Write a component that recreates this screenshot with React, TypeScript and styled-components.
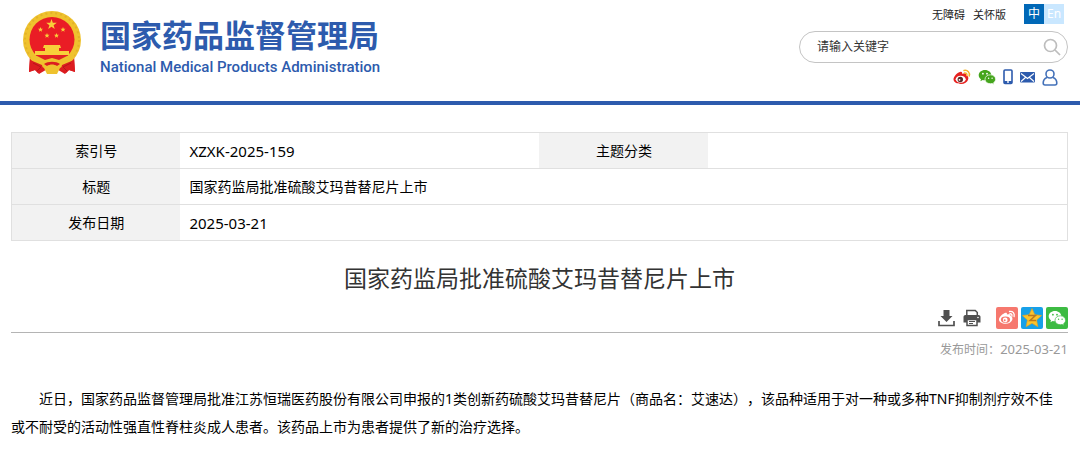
import React from "react";
import styled, { createGlobalStyle } from "styled-components";

const GlobalStyle = createGlobalStyle`
  *, *::before, *::after { box-sizing: border-box; }
  body {
    margin: 0;
    background: #fff;
    color: #000;
    font-family: "Noto Sans", "Noto Sans CJK SC", sans-serif;
    font-size: 14px;
    text-spacing-trim: space-all;
  }
`;

const Header = styled.header`
  display: flex;
  justify-content: space-between;
  height: 105px;
  padding: 4px 12px 0 22px;
  border-bottom: 4px solid #2d5bad;
`;

const Brand = styled.a`
  display: flex;
  align-items: flex-start;
  gap: 18px;
  padding-top: 6px;
  color: #2d5bad;
  text-decoration: none;
`;

const BrandText = styled.span`
  display: flex;
  flex-direction: column;
  padding-top: 2px;
`;

const BrandName = styled.span`
  font: 700 31px/44px "Noto Sans CJK SC", sans-serif;
  white-space: nowrap;
`;

const BrandLatin = styled.span`
  font: 500 15px/22px Roboto, sans-serif;
  white-space: nowrap;
`;

const Tools = styled.div`
  display: flex;
  flex-direction: column;
  align-items: flex-end;
  width: 269px;
`;

const TopLinks = styled.nav`
  display: flex;
  align-items: center;
  gap: 8px;
  height: 20px;
  padding-right: 4px;
  font-size: 11px;
`;

const TopLink = styled.a`
  color: #222;
  text-decoration: none;
  white-space: nowrap;
`;

const Languages = styled.div`
  display: flex;
  margin-left: 10px;
`;

const Language = styled.button<{ $active?: boolean }>`
  width: 20px;
  height: 20px;
  padding: 0;
  border: 0;
  background: ${(p) => (p.$active ? "#0068b7" : "#c9e7ff")};
  color: #fff;
  font: 12px/20px "Noto Sans", "Noto Sans CJK SC", sans-serif;
`;

const Search = styled.form`
  display: flex;
  align-items: center;
  width: 100%;
  height: 32px;
  margin-top: 7px;
  padding: 0 6px 0 17px;
  border: 1px solid #c4c4c4;
  border-radius: 16px;
`;

const SearchInput = styled.input`
  flex: 1;
  min-width: 0;
  padding: 0;
  border: 0;
  outline: 0;
  background: none;
  font: 12px/20px "Noto Sans", "Noto Sans CJK SC", sans-serif;
  &::placeholder { color: #333; opacity: 1; }
`;

const IconButton = styled.button`
  display: flex;
  padding: 0;
  border: 0;
  background: none;
`;

const IconLink = styled.a`
  display: flex;
`;

const Contacts = styled.div`
  display: flex;
  align-items: center;
  gap: 7px;
  height: 18px;
  margin-top: 5px;
  padding-right: 10px;
`;

const Main = styled.main`
  padding: 27px 12px 8px 11px;
`;

const Info = styled.table`
  width: 100%;
  table-layout: fixed;
  border-collapse: collapse;
`;

const LabelColumn = styled.col`
  width: 16%;
`;

const ValueColumn = styled.col`
  width: 34%;
`;

const Row = styled.tr`
  height: 36px;
  border: 1px solid #e0e0e0;
`;

const Label = styled.th`
  padding: 0;
  background: #f2f2f2;
  font-weight: 400;
  line-height: 20px;
`;

const Value = styled.td<{ $latin?: boolean }>`
  padding: 0 9px;
  font-size: ${(p) => (p.$latin ? 15 : 14)}px;
  line-height: 20px;
`;

const Title = styled.h1`
  margin: 20px 0 12px;
  color: #333;
  font-size: 23px;
  font-weight: 400;
  line-height: 34px;
  text-align: center;
`;

const Actions = styled.div`
  display: flex;
  justify-content: flex-end;
  align-items: center;
  gap: 3px;
  height: 26px;
  padding-bottom: 4px;
  border-bottom: 1px solid #b4b4b4;
`;

const PageActions = styled.div`
  display: flex;
  gap: 8px;
  margin-right: 12px;
`;

const Published = styled.p`
  display: flex;
  justify-content: flex-end;
  align-items: baseline;
  margin: 6px 0 25px;
  color: #999;
  font-size: 12px;
  line-height: 20px;
`;

const PublishedDate = styled.time`
  font-size: 13px;
`;

const Article = styled.p`
  margin: 0;
  padding-right: 4px;
  line-height: 28px;
  text-indent: 2em;
`;

const Emblem = () => (
  <svg width="60" height="65" viewBox="0 0 60 65" aria-hidden="true">
    <path d="M8 44L7 62l6-2 4 4 10-6h6l10 6 4-4 6 2-1-18z" fill="#dc1c20" />
    <circle cx="30" cy="30" r="29" fill="#efc22e" />
    <circle cx="30" cy="30" r="27" fill="none" stroke="#e3b228" strokeWidth="2" strokeDasharray="2 3" />
    <circle cx="30" cy="29.500" r="22.500" fill="#ea1d25" />
    <g fill="#f8cf3a">
      <path d="M29.500 9l1.300 3.800h4l-3.200 2.400 1.200 3.900-3.300-2.300-3.300 2.300 1.200-3.900-3.200-2.400h4z" />
      <path d="M18.500 17l.7 1.700h1.800l-1.400 1.200.5 1.800-1.600-1-1.600 1 .5-1.800-1.400-1.200h1.800zM41 17l.7 1.700h1.800l-1.400 1.200.5 1.800-1.600-1-1.600 1 .5-1.800-1.400-1.200h1.800zM25 23l.7 1.700h1.800l-1.400 1.200.5 1.800-1.600-1-1.600 1 .5-1.800-1.400-1.200h1.800zM34.500 23l.7 1.700h1.800l-1.400 1.200.5 1.800-1.600-1-1.600 1 .5-1.800-1.400-1.200h1.800z" />
      <path d="M22 35h16l1 3h-2v3h10v4H13v-4h10v-3h-2z" />
    </g>
    <path d="M6 42c3 2 5 4 8 4h32c3 0 5-2 8-4l-6 11-9 3-4 8H25l-4-8-9-3z" fill="#efc22e" />
    <path d="M15 46h30l-8 4-7-2-7 2z" fill="#df2322" />
    <path d="M22 54c4-3 12-3 16 0l-3 2c-3-2-7-2-10 0z" fill="#dc1c20" />
    <path d="M8 50l12 5 1 4-5 4-3-3-6 2zM52 50l-12 5-1 4 5 4 3-3 6 2z" fill="#dc1c20" />
    <path d="M11 53l8 4-4 4M49 53l-8 4 4 4" fill="none" stroke="#b81419" />
  </svg>
);

const SearchIcon = () => (
  <svg width="18" height="18" viewBox="0 0 18 18" fill="none" stroke="#bdbdbd" strokeWidth="1.700" aria-hidden="true">
    <circle cx="7.500" cy="7.500" r="6" />
    <path d="M12 12l5 5" />
  </svg>
);

const WeiboIcon = () => (
  <svg width="18" height="16" viewBox="0 0 18 16" aria-hidden="true">
    <path d="M7 3c1.500-.6 2.500.1 2 1.700 3-1.100 4.500-.4 4 1.300 4.500 1.500 2.500 9-5 9C4 15 .5 13.300.5 10.300.5 7.500 5 3 7 3z" fill="#e6211f" />
    <ellipse cx="7.700" cy="10.200" rx="5" ry="3.500" fill="#fff" />
    <circle cx="7.300" cy="10.500" r="2.700" fill="#5a2b28" />
    <circle cx="6.500" cy="10.800" r=".9" fill="#fff" />
    <path d="M11 1.500c3.700-.8 6.200 2 5.200 5.500M11.500 4c1.800-.3 2.800.8 2.300 2.500" fill="none" stroke="#f4b52b" strokeWidth="1.500" strokeLinecap="round" />
  </svg>
);

const WechatIcon = ({ size, color, eye }: { size: number; color: string; eye: string }) => (
  <svg width={size} height={size} viewBox="0 0 18 18" aria-hidden="true">
    <path d="M7 2C3.400 2 .7 4.300.7 7.200c0 1.700.9 3.100 2.300 4l-.6 2 2.300-1.200c.7.2 1.500.3 2.300.3 3.600 0 6.300-2.300 6.300-5.100S10.600 2 7 2z" fill={color} />
    <path d="M12.300 6.800c-3 0-5.300 2-5.300 4.500s2.300 4.400 5.300 4.400c.6 0 1.200-.1 1.800-.3l2 1-.5-1.700c1.200-.8 2-2 2-3.400 0-2.500-2.300-4.500-5.300-4.500z" fill={color} stroke={eye} strokeWidth=".7" />
    <g fill={eye}>
      <circle cx="4.900" cy="5.700" r=".9" />
      <circle cx="9" cy="5.700" r=".9" />
      <circle cx="10.600" cy="10.200" r=".7" />
      <circle cx="14.100" cy="10.200" r=".7" />
    </g>
  </svg>
);

const PhoneIcon = () => (
  <svg width="10" height="16" viewBox="0 0 10 16" aria-hidden="true">
    <rect x="1" y="1" width="8" height="13.500" rx="1" fill="#fff" stroke="#2d5bad" strokeWidth="1.600" />
    <path d="M1 12h8v2.500H1z" fill="#2d5bad" />
    <circle cx="5" cy="13" r=".9" fill="#fff" />
  </svg>
);

const MailIcon = () => (
  <svg width="15" height="16" viewBox="0 0 15 16" aria-hidden="true">
    <rect y="3" width="15" height="10.500" rx="1" fill="#2d5bad" />
    <path d="M1 4.500l6.500 5 6.500-5M1 12.500l4.500-4M14 12.500l-4.500-4" fill="none" stroke="#fff" strokeWidth="1.100" />
  </svg>
);

const UserIcon = () => (
  <svg width="16" height="17" viewBox="0 0 16 17" fill="none" stroke="#4371b9" strokeWidth="1.600" aria-hidden="true">
    <circle cx="8" cy="5" r="4" />
    <path d="M5 8.500c-2.500 1-3.800 3-3.800 5.500 0 1.500.6 2 1.800 2h10c1.200 0 1.800-.5 1.800-2 0-2.500-1.300-4.500-3.800-5.500" />
  </svg>
);

const DownloadIcon = () => (
  <svg width="17" height="18" viewBox="0 0 17 18" fill="#505050" aria-hidden="true">
    <path d="M5.500 1h6v6h3l-6 6-6-6h3z" />
    <path d="M1 12v4.500h15V12" fill="none" stroke="#505050" strokeWidth="1.700" />
  </svg>
);

const PrintIcon = () => (
  <svg width="18" height="18" viewBox="0 0 18 18" aria-hidden="true">
    <path d="M3.800 6V1.500h8.500l2 2V6" fill="#fff" stroke="#505050" strokeWidth="1.500" />
    <path d="M2.500 6h13C17 6 17.500 7 17.500 8v5.500H.5V8c0-1 .5-2 2-2z" fill="#505050" />
    <path d="M4 10.500h10v6H4z" fill="#fff" stroke="#505050" strokeWidth="1.500" />
    <path d="M6 12.500h6M6 14.500h4" stroke="#505050" />
    <circle cx="15" cy="8.500" r=".8" fill="#fff" />
  </svg>
);

const ShareWeiboIcon = () => (
  <svg width="22" height="22" viewBox="0 0 22 22" aria-hidden="true">
    <rect width="22" height="22" rx="2" fill="#f6786e" />
    <path d="M9 6c1.500-.5 2.300.2 1.900 1.600 2.500-.9 4-.3 3.500 1.200 4 1.500 2.200 8-4.900 8C6 16.800 3 15.300 3 12.600 3 10 7 6.500 9 6z" fill="#fff" />
    <ellipse cx="9.500" cy="12.700" rx="4.600" ry="3.100" fill="#f6786e" />
    <circle cx="9.200" cy="12.900" r="2.400" fill="#fff" />
    <circle cx="8.700" cy="13.200" r="1" fill="#f6786e" />
    <path d="M13.500 4.500c3.500-.5 5.300 2 4.600 5M13.800 6.800c1.600-.2 2.400.8 2.100 2.200" fill="none" stroke="#fff" strokeWidth="1.300" strokeLinecap="round" />
  </svg>
);

const ShareQzoneIcon = () => (
  <svg width="22" height="22" viewBox="0 0 22 22" aria-hidden="true">
    <rect width="22" height="22" rx="2" fill="#17a0e8" />
    <path d="M11 1.500l2.800 6.200 6.800.8-5 4.500 1.300 6.700-5.900-3.400-5.900 3.400L6.400 13l-5-4.500 6.800-.8z" fill="#fcc32c" stroke="#e8a11d" strokeWidth=".6" />
    <path d="M7 8.500h7.500L9 13.500h6" fill="none" stroke="#bd781c" strokeWidth="1.500" />
  </svg>
);

const WechatTile = styled.a`
  display: flex;
  align-items: center;
  justify-content: center;
  width: 22px;
  height: 22px;
  border-radius: 2px;
  background: #3dbb43;
`;

export default function App() {
  return (
    <>
      <GlobalStyle />
      <Header>
        <Brand href="#">
          <Emblem />
          <BrandText>
            <BrandName>国家药品监督管理局</BrandName>
            <BrandLatin>National Medical Products Administration</BrandLatin>
          </BrandText>
        </Brand>
        <Tools>
          <TopLinks>
            <TopLink href="#">无障碍</TopLink>
            <TopLink href="#">关怀版</TopLink>
            <Languages>
              <Language type="button" $active>中</Language>
              <Language type="button">En</Language>
            </Languages>
          </TopLinks>
          <Search onSubmit={(e) => e.preventDefault()}>
            <SearchInput type="text" aria-label="请输入关键字" placeholder="请输入关键字" />
            <IconButton type="submit" aria-label="搜索"><SearchIcon /></IconButton>
          </Search>
          <Contacts>
            <IconLink href="#" aria-label="微博"><WeiboIcon /></IconLink>
            <IconLink href="#" aria-label="微信"><WechatIcon size={18} color="#45a51d" eye="#fff" /></IconLink>
            <IconLink href="#" aria-label="手机版"><PhoneIcon /></IconLink>
            <IconLink href="#" aria-label="邮箱"><MailIcon /></IconLink>
            <IconLink href="#" aria-label="用户"><UserIcon /></IconLink>
          </Contacts>
        </Tools>
      </Header>
      <Main>
        <Info>
          <colgroup>
            <LabelColumn />
            <ValueColumn />
            <LabelColumn />
            <ValueColumn />
          </colgroup>
          <tbody>
            <Row>
              <Label scope="row">索引号</Label>
              <Value $latin>XZXK-2025-159</Value>
              <Label scope="row">主题分类</Label>
              <Value />
            </Row>
            <Row>
              <Label scope="row">标题</Label>
              <Value colSpan={3}>国家药监局批准硫酸艾玛昔替尼片上市</Value>
            </Row>
            <Row>
              <Label scope="row">发布日期</Label>
              <Value colSpan={3} $latin>2025-03-21</Value>
            </Row>
          </tbody>
        </Info>
        <Title>国家药监局批准硫酸艾玛昔替尼片上市</Title>
        <Actions>
          <PageActions>
            <IconButton type="button" aria-label="下载"><DownloadIcon /></IconButton>
            <IconButton type="button" aria-label="打印"><PrintIcon /></IconButton>
          </PageActions>
          <IconLink href="#" aria-label="分享到微博"><ShareWeiboIcon /></IconLink>
          <IconLink href="#" aria-label="分享到QQ空间"><ShareQzoneIcon /></IconLink>
          <WechatTile href="#" aria-label="分享到微信"><WechatIcon size={18} color="#fff" eye="#3dbb43" /></WechatTile>
        </Actions>
        <Published>
          发布时间：<PublishedDate dateTime="2025-03-21">2025-03-21</PublishedDate>
        </Published>
        <Article>
          近日，国家药品监督管理局批准江苏恒瑞医药股份有限公司申报的1类创新药硫酸艾玛昔替尼片（商品名：艾速达），该品种适用于对一种或多种TNF抑制剂疗效不佳或不耐受的活动性强直性脊柱炎成人患者。该药品上市为患者提供了新的治疗选择。
        </Article>
      </Main>
    </>
  );
}
